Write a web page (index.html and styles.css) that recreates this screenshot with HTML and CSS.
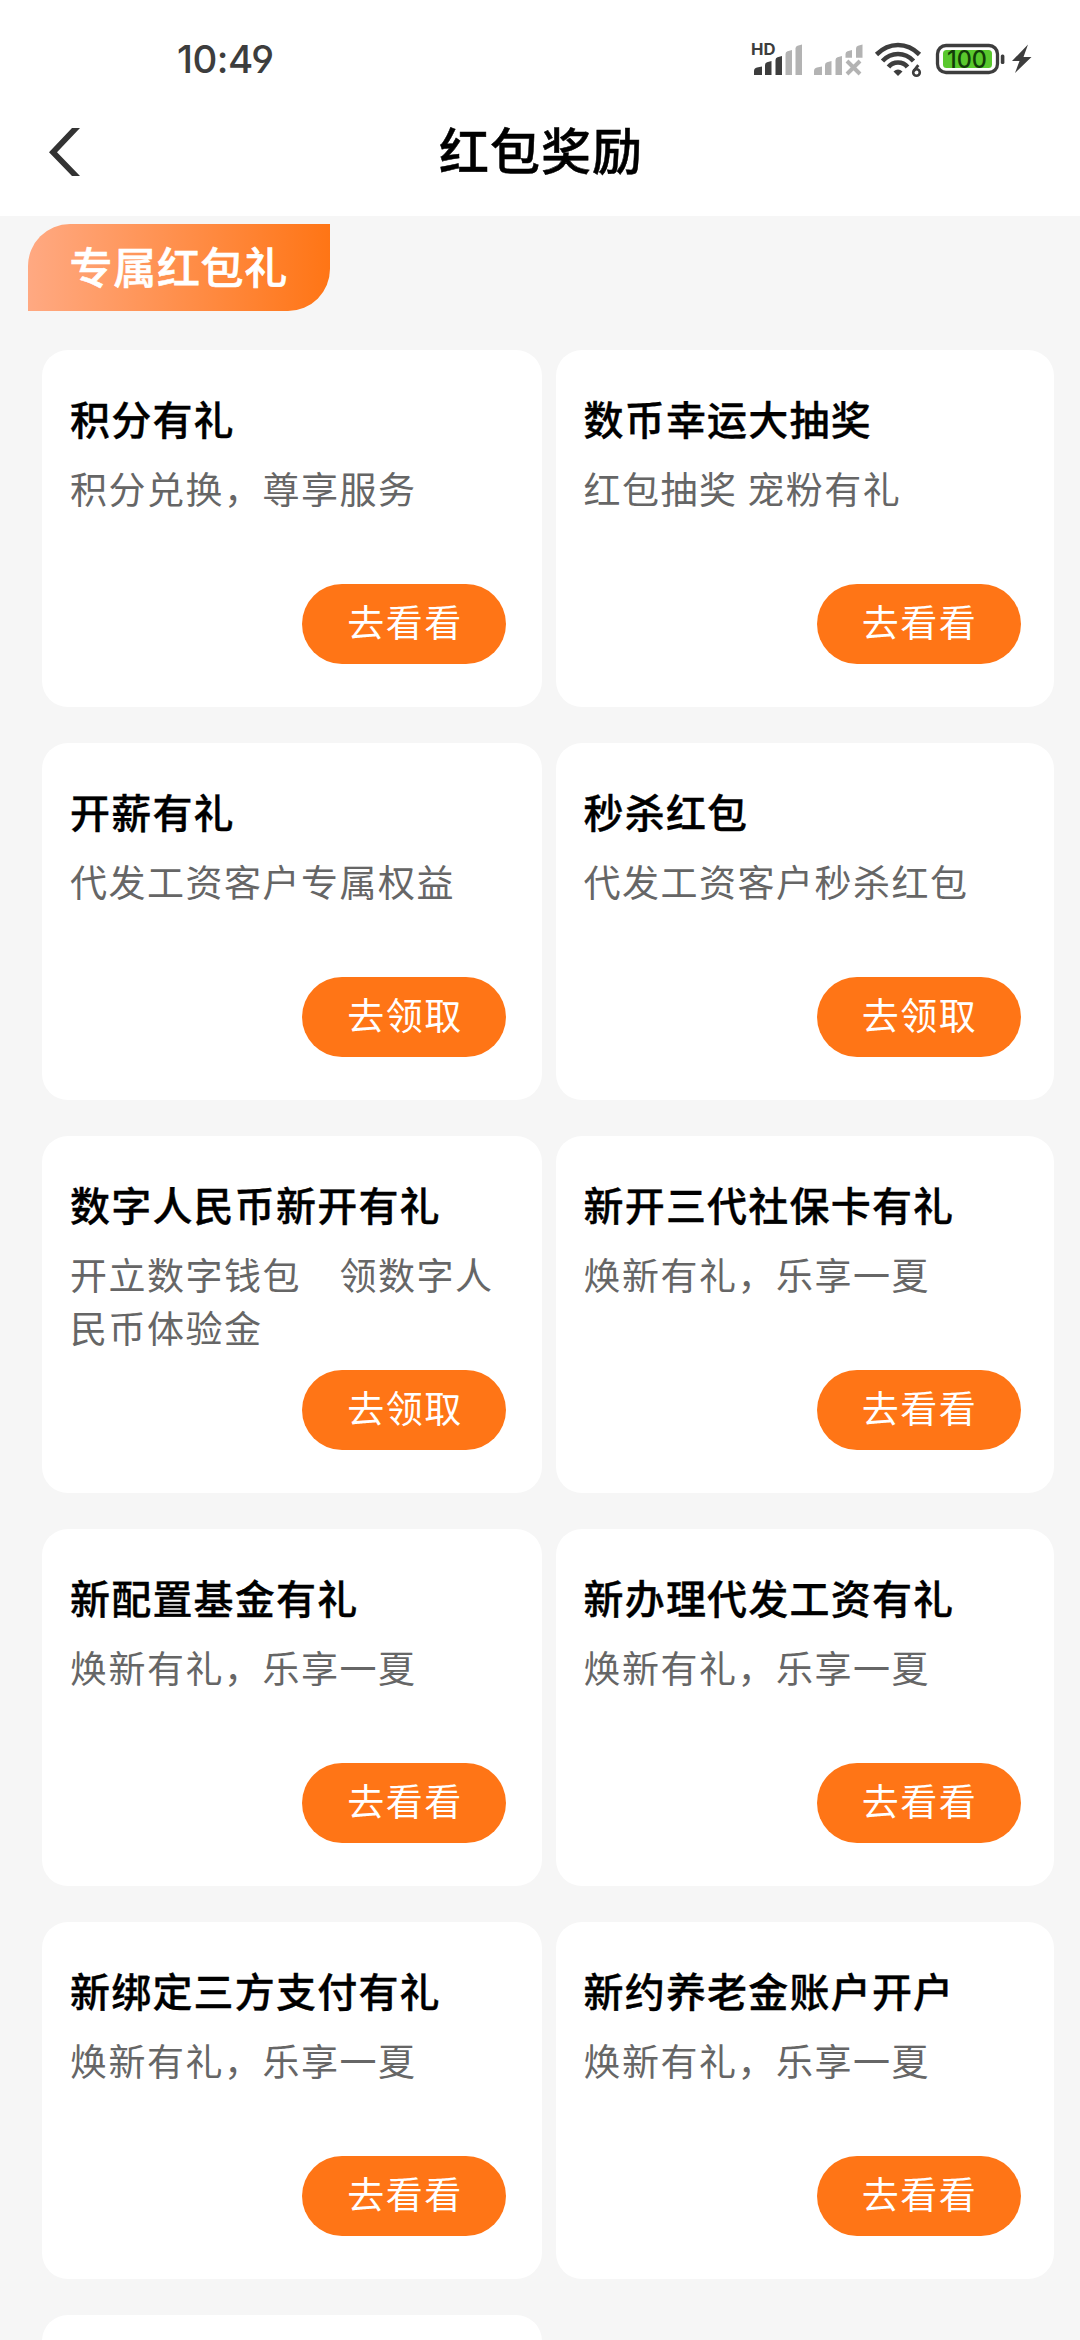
FILE: index.html
```html
<!DOCTYPE html>
<html lang="zh-CN">
<head>
<meta charset="utf-8">
<title>红包奖励</title>
<link rel="stylesheet" href="styles.css">
</head>
<body>
<header class="top">
  <div class="status">
    <span class="time">10:49</span>
    <svg class="status-icons" width="290" height="40" viewBox="748 40 290 40">
      <text class="hd" x="751" y="55" textLength="24.500" lengthAdjust="spacingAndGlyphs">HD</text>
      <g fill="#3d3d3d">
        <path d="M754 75v-4q0-3 3-3.500l5-1V75z"/>
        <path d="M765 75V65q0-2 2-2.700l4.500-1.300V75z"/>
        <path d="M775.500 75V60q0-2 2-2.700l4.500-1.300V75z"/>
      </g>
      <g fill="#b3b3b3">
        <path d="M785.500 75V54q0-2 2-2.700l4.500-1.300V75z"/>
        <path d="M795.500 75V48.500q0-2 2-2.700l4.500-1.300V75z"/>
        <path d="M814 75v-4q0-3 3-3.500l5-1V75z"/>
        <path d="M825 75V65q0-2 2-2.700l4.500-1.300V75z"/>
        <path d="M835.500 75V60q0-2 2-2.700l4.500-1.300V75z"/>
        <path d="M845.500 57.700V54q0-2 2-2.700l4.500-1.300v7.700z"/>
        <path d="M856 57.700V48.500q0-2 2-2.700l4.500-1.300v13.200z"/>
      </g>
      <path d="M847 61l13 13M860 61l-13 13" stroke="#b3b3b3" stroke-width="4" fill="none"/>
      <g fill="none" stroke="#3d3d3d" stroke-width="4.600">
        <path d="M876.500 54.500Q886 45 898 45t21.500 9.500"/>
        <path d="M882.500 61Q889 54 898 54t15.500 7"/>
        <path d="M888.500 67Q892 62.500 898 62.500t9.500 4.500"/>
      </g>
      <path d="M893.500 71.500q4.500-4 9 0L898 76z" fill="#3d3d3d"/>
      <path d="M918.300 65.200l-4.600 6" stroke="#3d3d3d" stroke-width="2.800" fill="none"/>
      <circle cx="916.500" cy="72.500" r="3.300" stroke="#3d3d3d" stroke-width="2.600" fill="none"/>
      <rect x="937.500" y="45.500" width="60" height="27" rx="8.500" stroke="#3d3d3d" stroke-width="3.300" fill="none"/>
      <rect x="943" y="50" width="49" height="18" rx="3.500" fill="#59c82d"/>
      <text class="charge" x="947" y="68" textLength="40" lengthAdjust="spacingAndGlyphs">100</text>
      <rect x="1000.800" y="54.500" width="3.600" height="9.500" rx="1.500" fill="#3d3d3d"/>
      <path d="M1028 44.500L1012 61h7.500L1015 73l16.500-16h-8z" fill="#3d3d3d"/>
    </svg>
  </div>
  <div class="nav">
    <svg class="back" width="31" height="48" viewBox="0 0 31 48"><path d="M31 0h-8L0 24.300 23 48h8L8 24.300z" fill="#333"/></svg>
    <h1 class="nav-title">红包奖励</h1>
  </div>
</header>
<main>
  <h2 class="badge">专属红包礼</h2>
  <div class="cards">
    <section class="card"><h3 class="name">积分有礼</h3><p class="desc">积分兑换，尊享服务</p><a class="go">去看看</a></section>
    <section class="card"><h3 class="name">数币幸运大抽奖</h3><p class="desc">红包抽奖 宠粉有礼</p><a class="go">去看看</a></section>
    <section class="card"><h3 class="name">开薪有礼</h3><p class="desc">代发工资客户专属权益</p><a class="go">去领取</a></section>
    <section class="card"><h3 class="name">秒杀红包</h3><p class="desc">代发工资客户秒杀红包</p><a class="go">去领取</a></section>
    <section class="card"><h3 class="name">数字人民币新开有礼</h3><p class="desc">开立数字钱包　领数字人民币体验金</p><a class="go">去领取</a></section>
    <section class="card"><h3 class="name">新开三代社保卡有礼</h3><p class="desc">焕新有礼，乐享一夏</p><a class="go">去看看</a></section>
    <section class="card"><h3 class="name">新配置基金有礼</h3><p class="desc">焕新有礼，乐享一夏</p><a class="go">去看看</a></section>
    <section class="card"><h3 class="name">新办理代发工资有礼</h3><p class="desc">焕新有礼，乐享一夏</p><a class="go">去看看</a></section>
    <section class="card"><h3 class="name">新绑定三方支付有礼</h3><p class="desc">焕新有礼，乐享一夏</p><a class="go">去看看</a></section>
    <section class="card"><h3 class="name">新约养老金账户开户</h3><p class="desc">焕新有礼，乐享一夏</p><a class="go">去看看</a></section>
    <section class="card"></section>
  </div>
</main>
</body>
</html>
```

FILE: styles.css
```css
* { box-sizing: border-box; margin: 0; padding: 0; }
html { overflow: hidden; }
body {
  width: 1080px;
  height: 2340px;
  overflow: hidden;
  background: #f6f6f6;
  font-family: "Noto Sans CJK SC", sans-serif;
}
.top { height: 216px; background: #fff; }
.status {
  height: 120px;
  padding: 0 42px 0 177px;
  display: flex;
  align-items: center;
  justify-content: space-between;
}
.time {
  padding-bottom: 2px;
  font: 500 38.5px/40px Inter, sans-serif;
  font-feature-settings: "cv03", "cv04";
  letter-spacing: -0.5px;
  color: #3d3d3d;
}
.status-icons { display: block; }
.hd { font: 700 15.5px Inter, sans-serif; fill: #3d3d3d; }
.charge { font: 500 24px Inter, sans-serif; fill: #123c08; }
.nav {
  height: 64px;
  padding: 0 49px;
  display: grid;
  grid-template-columns: 31px 1fr 31px;
  align-items: center;
}
.nav-title {
  padding: 0 0 7px 2px;
  font-size: 50px;
  line-height: 57px;
  font-weight: 500;
  letter-spacing: 1px;
  text-align: center;
  color: #000;
  -webkit-text-stroke: 0.5px #000;
}
.badge {
  width: 302px;
  height: 87px;
  margin: 8px 0 0 28px;
  padding-left: 41.5px;
  border-radius: 42px 0;
  background: linear-gradient(90deg, #ffa982, #ff7515);
  color: #fff;
  font-size: 43px;
  line-height: 82px;
  font-weight: 500;
  letter-spacing: 0.7px;
  -webkit-text-stroke: 0.6px #fff;
}
.cards {
  height: 1990px;
  overflow: hidden;
  margin: 39px 0 0 42px;
  display: grid;
  grid-template-columns: 500px 498px;
  grid-auto-rows: 357px;
  gap: 36.1px 13.5px;
}
.card {
  padding: 40px 36px 43px 28px;
  border-radius: 26px;
  background: #fff;
  display: flex;
  flex-direction: column;
}
.card:nth-child(even) { padding-right: 33px; }
.name {
  font-size: 40px;
  line-height: 56px;
  font-weight: 500;
  letter-spacing: 1.2px;
  white-space: nowrap;
  color: #000;
  -webkit-text-stroke: 0.35px #000;
}
.desc {
  margin-top: 16px;
  font-size: 37px;
  line-height: 53px;
  font-weight: 400;
  letter-spacing: 1.5px;
  color: #666;
}
.go {
  width: 204px;
  height: 80px;
  margin: auto 0 0 auto;
  padding-left: 2px;
  border-radius: 40px;
  background: #ff7516;
  color: #fff;
  font-size: 37px;
  line-height: 74px;
  letter-spacing: 1.5px;
  text-align: center;
}
```
